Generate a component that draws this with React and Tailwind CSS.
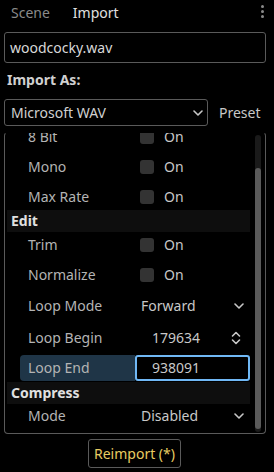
import React from "react";

const Chevron = () => (
  <svg width="10" height="6" viewBox="0 0 10 6" fill="none">
    <path d="M1 1l4 4 4-4" stroke="#c8c8c8" strokeWidth="1.6" strokeLinecap="round" strokeLinejoin="round" />
  </svg>
);

const Spinner = () => (
  <svg width="10" height="14" viewBox="0 0 10 14" fill="none">
    <path d="M1.5 5l3.5-3.5 3.5 3.5M1.5 9l3.5 3.5 3.5-3.5" stroke="#c8c8c8" strokeWidth="1.6" strokeLinecap="round" strokeLinejoin="round" />
  </svg>
);

const CheckRow = ({ label, h = "h-[27px]" }) => (
  <div className={"flex items-center shrink-0 " + h}>
    <div className="ml-[13px] w-[115px] pl-[8px] text-[#b4b4b4]">{label}</div>
    <div className="flex w-[115px] items-center pl-[5px]">
      <div className="h-[14px] w-[14px] rounded-[3px] bg-[#333333]" />
      <span className="ml-[10px] text-[#c8c8c8]">On</span>
    </div>
  </div>
);

const DropRow = ({ label, value, h = "h-[28px]" }) => (
  <div className={"flex items-center shrink-0 " + h}>
    <div className="ml-[13px] w-[115px] pl-[8px] text-[#b4b4b4]">{label}</div>
    <div className="flex w-[115px] items-center justify-between pl-[6px] pr-[6px] text-[#c8c8c8]">
      <span>{value}</span>
      <Chevron />
    </div>
  </div>
);

const Header = ({ label }) => (
  <div className="flex h-[22px] shrink-0 items-center bg-[#0e0e0e] pl-[4px] font-bold text-[#e0e0e0]">{label}</div>
);

export default function App() {
  return (
    <div className="flex h-[472px] w-[274px] flex-col overflow-hidden bg-black pl-[4px] font-['Noto_Sans',sans-serif] text-[14px] leading-[20px] text-[#c8c8c8]">
      <div className="flex h-[26px] shrink-0 items-center">
        <span className="ml-[7px] text-[#8a8a8a]">Scene</span>
        <span className="ml-[23px] text-[#e0e0e0]">Import</span>
        <div className="ml-auto mr-[10px] flex flex-col gap-[2px] pb-[4px]">
          <div className="h-[3px] w-[3px] rounded-full bg-[#8a8a8a]" />
          <div className="h-[3px] w-[3px] rounded-full bg-[#8a8a8a]" />
          <div className="h-[3px] w-[3px] rounded-full bg-[#8a8a8a]" />
        </div>
      </div>

      <div className="mt-[6px] flex h-[31px] w-[262px] shrink-0 items-center rounded-[3px] border border-[#5a5a5a] pl-[5px] text-[#d8d8d8]">
        woodcocky.wav
      </div>

      <div className="mt-[7px] h-[20px] shrink-0 pl-[3px] font-bold text-[#d0d0d0]">Import As:</div>

      <div className="mt-[9px] flex h-[27px] shrink-0 items-center">
        <div className="flex h-[27px] w-[204px] items-center justify-between rounded-[3px] border border-[#5a5a5a] pl-[6px] pr-[4px] text-[#d0d0d0]">
          <span>Microsoft WAV</span>
          <Chevron />
        </div>
        <span className="ml-[11px] text-[#c8c8c8]">Preset</span>
      </div>

      <div className="mt-[6px] flex h-[302px] w-[262px] shrink-0 overflow-hidden rounded-[4px] border border-[#5a5a5a] border-t-black">
        <div className="flex w-[245px] flex-col overflow-hidden pl-[2px]">
          <div className="-mt-[10px] flex flex-col gap-[3px]">
            <CheckRow label="8 Bit" />
            <CheckRow label="Mono" />
            <CheckRow label="Max Rate" />
          </div>
          <Header label="Edit" />
          <div className="flex flex-col gap-[4px]">
            <CheckRow label="Trim" h="h-[26px]" />
            <CheckRow label="Normalize" h="h-[26px]" />
            <DropRow label="Loop Mode" value="Forward" />
            <div className="flex h-[27px] items-center shrink-0">
              <div className="ml-[13px] w-[115px] pl-[8px] text-[#b4b4b4]">Loop Begin</div>
              <div className="flex w-[115px] items-center justify-between pl-[17px] pr-[9px] text-[#c8c8c8]">
                <span>179634</span>
                <Spinner />
              </div>
            </div>
            <div className="flex h-[26px] items-stretch shrink-0">
              <div className="ml-[13px] flex w-[115px] items-center rounded-l-[4px] bg-[#1f3547] pl-[8px] text-[#b4b4b4]">Loop End</div>
              <div className="flex w-[115px] items-center rounded-[3px] border-2 border-[#70b8f5] bg-black pl-[15px] text-[#c8c8c8]">
                938091
              </div>
            </div>
          </div>
          <div className="mt-[1px]">
            <Header label="Compress" />
          </div>
          <DropRow label="Mode" value="Disabled" h="h-[23px]" />
        </div>
        <div className="ml-[5px] mt-[2px] mb-[1px] flex w-[6px] flex-col overflow-hidden rounded-full bg-[#1a1a1a]">
          <div className="mt-[33px] mb-[3px] flex-1 rounded-full bg-[#5a5a5a]" />
        </div>
      </div>

      <div className="ml-[84px] mt-[5px] flex h-[29px] w-[93px] shrink-0 items-center justify-center rounded-[3px] border border-[#5a5a5a] text-[#e8cc62]">
        Reimport (*)
      </div>
    </div>
  );
}
